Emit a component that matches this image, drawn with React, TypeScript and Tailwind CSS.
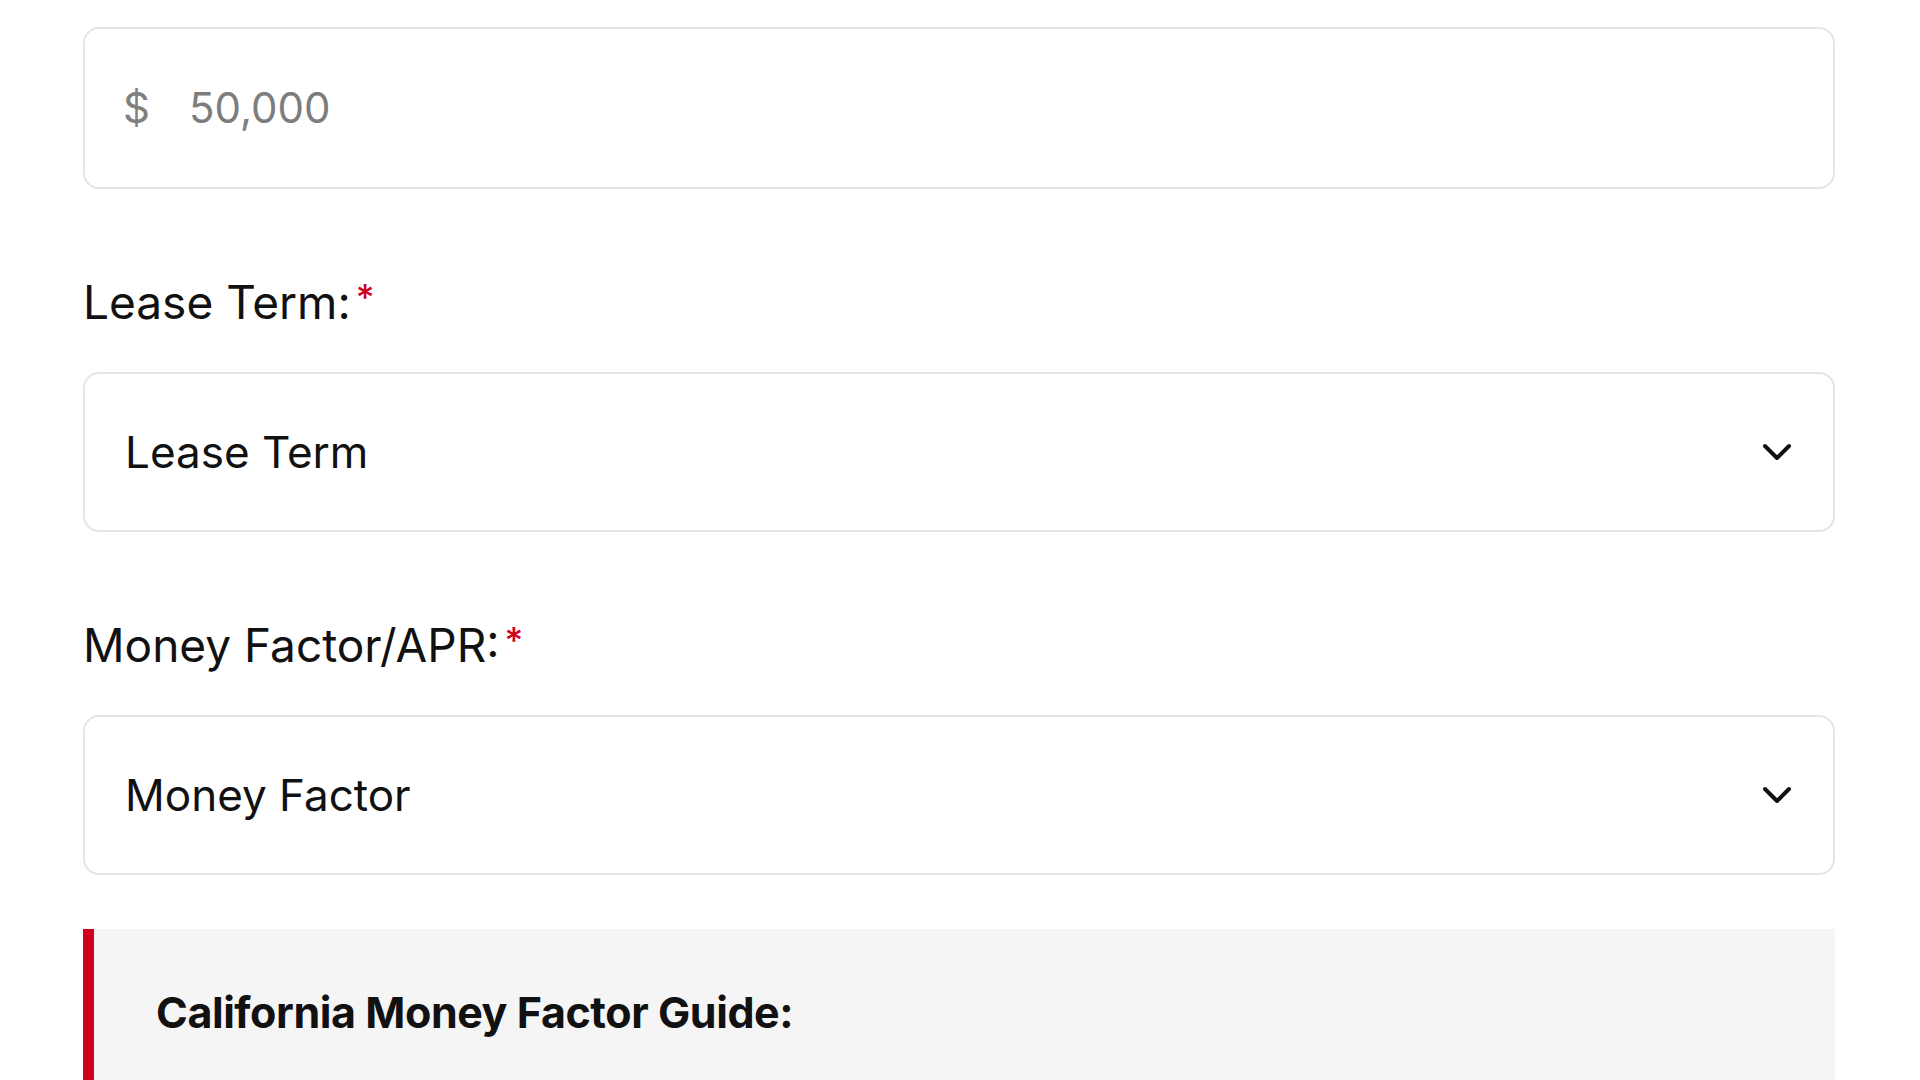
const font = { fontFamily: 'Inter, "Liberation Sans", sans-serif' }

function Chevron() {
  return (
    <svg width="30" height="19" viewBox="0 0 30 19" fill="none" aria-hidden>
      <path d="M3 3 L15 15 L27 3" stroke="#111" strokeWidth="4" strokeLinecap="round" strokeLinejoin="round" />
    </svg>
  )
}

function Label({ text }: { text: string }) {
  return (
    <div className="mt-[90px] mb-[47px] flex items-start text-[46px] leading-[46px] text-[#111]">
      <span>{text}</span>
      <span className="ml-[5px] text-[36px] leading-[36px] font-medium text-[#d0021b]">*</span>
    </div>
  )
}

function SelectBox({ value }: { value: string }) {
  return (
    <div className="flex h-[160px] items-center justify-between rounded-[16px] border-2 border-[#e4e4e4] bg-white pl-[40px] pr-[41px]">
      <span className="text-[44px] leading-none text-[#111]">{value}</span>
      <Chevron />
    </div>
  )
}

export default function App() {
  return (
    <div className="min-h-screen bg-white pl-[83px] pr-[85px] pt-[27px]" style={font}>
      <div className="flex h-[162px] items-center rounded-[16px] border-2 border-[#e4e4e4] bg-white pl-[38px]">
        <span className="text-[42px] leading-none text-[#808080]">$</span>
        <span className="ml-[39px] text-[42px] leading-none text-[#7d7d7d]">50,000</span>
      </div>

      <Label text="Lease Term:" />
      <SelectBox value="Lease Term" />

      <Label text="Money Factor/APR:" />
      <SelectBox value="Money Factor" />

      <div className="mt-[54px] border-l-[11px] border-[#d0021b] bg-[#f5f5f5] pl-[62px] pt-[59px] pb-[80px]">
        <h3 className="text-[43px] font-bold leading-[48px] tracking-[-0.01em] text-[#111]">
          California Money Factor Guide:
        </h3>
      </div>
    </div>
  )
}
